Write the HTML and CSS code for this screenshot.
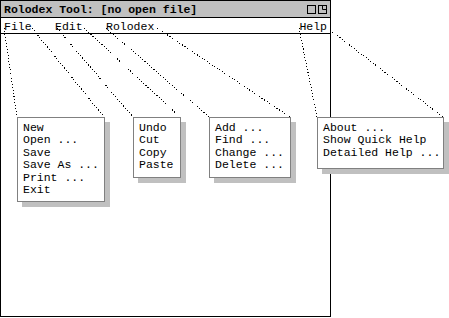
FILE: index.html
```html
<!DOCTYPE html>
<html lang="en">
<head>
    <meta charset="UTF-8">
    <title>Rolodex Tool</title>
    <link rel="stylesheet" href="styles.css">
</head>
<body>
    <div class="window">
        <div class="titlebar">
            <span class="title">Rolodex Tool: [no open file]</span>
            <span class="winicons">
                <svg width="9" height="9" viewBox="0 0 9 9"><rect x="0.5" y="0.5" width="8" height="8" fill="none" stroke="#000"/></svg>
                <svg width="9" height="9" viewBox="0 0 9 9"><rect x="0.5" y="0.5" width="8" height="8" fill="none" stroke="#000"/><path d="M4.5 0.5 V4.5 H8.5" fill="none" stroke="#000"/></svg>
            </span>
        </div>
        <div class="menubar">
            <span class="menu">File</span>
            <span class="menu">Edit</span>
            <span class="menu">Rolodex</span>
            <span class="menu help">Help</span>
        </div>
    </div>

    <!-- leader lines from each menu name to its pulldown -->
    <svg class="leaders" width="449" height="318" viewBox="0 0 449 318">
        <g stroke="#000" stroke-width="1" stroke-dasharray="1 2" fill="none" shape-rendering="crispEdges">
            <line x1="4" y1="28" x2="17" y2="117"/>
            <line x1="32" y1="28" x2="104" y2="117"/>
            <line x1="57" y1="28" x2="133" y2="117"/>
            <line x1="84" y1="28" x2="180" y2="117"/>
            <line x1="106" y1="28" x2="209" y2="117"/>
            <line x1="157" y1="28" x2="290" y2="117"/>
            <line x1="299" y1="28" x2="317" y2="117"/>
            <line x1="330" y1="30" x2="443" y2="117"/>
        </g>
    </svg>

    <div class="pulldown file-menu">
        <div>New</div>
        <div>Open ...</div>
        <div>Save</div>
        <div>Save As ...</div>
        <div>Print ...</div>
        <div>Exit</div>
    </div>
    <div class="pulldown edit-menu">
        <div>Undo</div>
        <div>Cut</div>
        <div>Copy</div>
        <div>Paste</div>
    </div>
    <div class="pulldown rolodex-menu">
        <div>Add ...</div>
        <div>Find ...</div>
        <div>Change ...</div>
        <div>Delete ...</div>
    </div>
    <div class="pulldown help-menu">
        <div>About ...</div>
        <div>Show Quick Help</div>
        <div>Detailed Help ...</div>
    </div>
</body>
</html>
```

FILE: styles.css
```css
body {margin: 0; background: #fff; font-family: 'Liberation Mono', 'DejaVu Sans Mono', monospace; font-size: 11.5px; color: #000; width: 449px; height: 318px; position: relative; overflow: hidden;}
.window {width: 329px; height: 315px; border: 1px solid #000; display: flex; flex-direction: column;}
.titlebar {height: 16px; background: #c0c0c0; border-bottom: 1px solid #000; display: flex; align-items: center; padding: 0 3px 0 3px;}
.title {font-weight: bold; flex: 1;}
.winicons {display: flex; gap: 2px;}
.winicons svg {display: block;}
.menubar {height: 16px; border-bottom: 1px solid #000; display: flex; align-items: center; gap: 23.4px; padding: 1px 3px 0 3px; box-sizing: border-box;}
.help {margin-left: auto;}
.leaders {position: absolute; left: 0; top: 0;}
.pulldown {position: absolute; top: 117px; background: #fff; border: 1px solid #808080; box-shadow: 5px 5px 0 #c0c0c0; padding: 4px 3px 5px 5px; line-height: 12.4px; box-sizing: border-box; white-space: nowrap;}
.file-menu {left: 17px; width: 88px; height: 85px;}
.edit-menu {left: 133px; width: 48px; height: 61px;}
.rolodex-menu {left: 209px; width: 82px; height: 61px;}
.help-menu {left: 317px; width: 127px; height: 52px;}
```
